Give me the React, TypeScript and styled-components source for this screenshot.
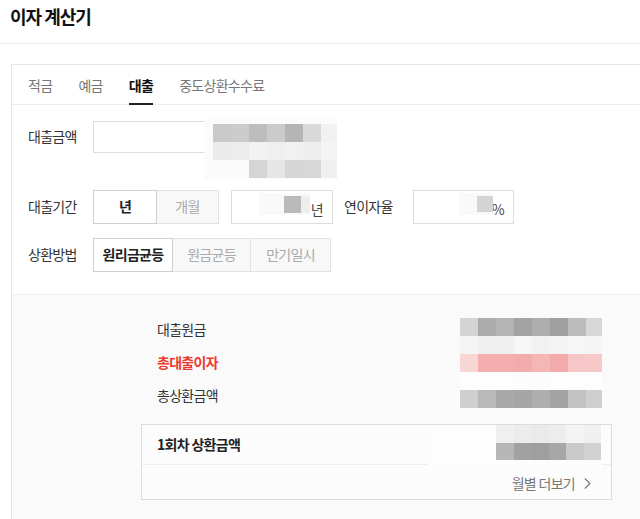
import styled, { createGlobalStyle } from "styled-components";
import { ChevronRight } from "lucide-react";

const GlobalStyle = createGlobalStyle`
  html, body {
    margin: 0;
    padding: 0;
    background: #fff;
    overflow: hidden;
  }
  body {
    font-family: "Noto Sans CJK KR", "Noto Sans", sans-serif;
    font-size: 14px;
    letter-spacing: -0.7px;
    color: #333;
  }
  * { box-sizing: border-box; }
`;

const TABS = ["적금", "예금", "대출", "중도상환수수료"];
const METHODS = ["원리금균등", "원금균등", "만기일시"];

// blurred (redacted) values, one colour per cell
const AMOUNT_CELLS = [
  ["#c9c9c9", "#cccccc", "#bdbdbd", "#cbcbcb", "#b5b5b5", "#d9d9d9", "#f1f1f1"],
  ["#ebebeb", "#ececec", "#f2f2f2", "#efefef", "#f1f1f1", "#eeeeee", "#f4f4f4"],
  ["transparent", "transparent", "#d5d5d5", "#e6e6e6", "#d6d6d6", "#d7d7d7", "#f0f0f0"],
];
const RESULT_CELLS = [
  ["#d4d4d4", "#ababab", "#b4b4b4", "#a3a3a3", "#adadad", "#9f9f9f", "#bcbcbc", "#d8d8d8"],
  ["#f5f5f5", "#f0f0f0", "#efefef", "#f6f6f6", "#f1f1f1", "#f3f3f3", "#f6f6f6", "#f5f5f5"],
  ["#f9d6d6", "#f4aeae", "#f4aeae", "#f3acac", "#f5b6b6", "#f3aaaa", "#f7c6c6", "#f7c8c8"],
  ["#fdfdfd", "#fdfdfd", "#fdfdfd", "#fcfcfc", "#fcfcfc", "#fdfdfd", "#fdfdfd", "#fdfdfd"],
  ["#cfcfcf", "#b9b9b9", "#a9a9a9", "#a5a5a5", "#aeaeae", "#a3a3a3", "#c2c2c2", "#cfcfcf"],
];
const FIRST_CELLS = [
  ["#efefef", "#ececec", "#eaeaea", "#ededed", "#f4f4f4", "#f0f0f0"],
  ["#b7b7b7", "#a2a2a2", "#9f9f9f", "#a7a7a7", "#c9c9c9", "#d2d2d2"],
];

function Mosaic({
  cells,
  size,
  x,
  y,
  w,
  h,
  padX,
  padY,
  bg,
}: {
  cells: string[][];
  size: number;
  x: number;
  y: number;
  w: number;
  h: number;
  padX: number;
  padY: number;
  bg: string;
}) {
  return (
    <MosaicBox $x={x} $y={y} $w={w} $h={h} $padX={padX} $padY={padY} $bg={bg}>
      <MosaicGrid $cols={cells[0].length} $size={size}>
        {cells.flat().map((c, idx) => (
          <Cell key={idx} $color={c} />
        ))}
      </MosaicGrid>
    </MosaicBox>
  );
}

function App() {
  return (
    <Page>
      <GlobalStyle />
      <Header>
        <Title>이자 계산기</Title>
      </Header>
      <Body>
        <Card>
          <TabBar>
            {TABS.map((t) => (
              <Tab key={t} $active={t === "대출"}>
                {t}
              </Tab>
            ))}
          </TabBar>
          <Form>
            <AmountRow>
              <Label>대출금액</Label>
              <Field $width={237}>
                <Mosaic
                  cells={AMOUNT_CELLS}
                  size={18}
                  x={110}
                  y={-3}
                  w={133}
                  h={60}
                  padX={9}
                  padY={5}
                  bg="#fbfbfb"
                />
              </Field>
            </AmountRow>
            <Row>
              <Label>대출기간</Label>
              <Segment>
                <SegButton $active $width={64}>
                  년
                </SegButton>
                <SegButton $width={62}>개월</SegButton>
              </Segment>
              <Field $width={102} $gap={12}>
                <Mosaic
                  cells={[["#bababa", "#eeeeee"]]}
                  size={17}
                  x={27}
                  y={2}
                  w={51}
                  h={22}
                  padX={25}
                  padY={3}
                  bg="#f9f9f9"
                />
                <Suffix>년</Suffix>
              </Field>
              <Label $gap={11} $width={69}>
                연이자율
              </Label>
              <Field $width={101}>
                <Mosaic
                  cells={[["#d4d4d4"]]}
                  size={16}
                  x={45}
                  y={2}
                  w={34}
                  h={22}
                  padX={18}
                  padY={3}
                  bg="#f9f9f9"
                />
                <Suffix>%</Suffix>
              </Field>
            </Row>
            <Row>
              <Label>상환방법</Label>
              <Segment>
                {METHODS.map((m, idx) => (
                  <SegButton key={m} $active={idx === 0} $width={idx === 1 ? 78 : 80}>
                    {m}
                  </SegButton>
                ))}
              </Segment>
            </Row>
          </Form>
          <ResultSection>
            <ResultList>
              <ResultRow>대출원금</ResultRow>
              <ResultRow $accent>총대출이자</ResultRow>
              <ResultRow>총상환금액</ResultRow>
              <Mosaic
                cells={RESULT_CELLS}
                size={18}
                x={319}
                y={6}
                w={142}
                h={90}
                padX={0}
                padY={0}
                bg="#fdfdfd"
              />
            </ResultList>
            <FirstBox>
              <FirstHead>1회차 상환금액</FirstHead>
              <FirstFoot>
                월별 더보기
                <ChevronRight size={19} strokeWidth={1.4} />
              </FirstFoot>
              <Mosaic
                cells={FIRST_CELLS}
                size={17.5}
                x={286}
                y={0}
                w={174}
                h={45}
                padX={68}
                padY={0}
                bg="#fdfdfd"
              />
            </FirstBox>
          </ResultSection>
        </Card>
      </Body>
    </Page>
  );
}
export default App;

const Page = styled.div`
  width: 640px;
  height: 519px;
  overflow: hidden;
  background: #fff;
`;

const Header = styled.div`
  height: 44px;
  padding: 4px 10px 0;
  border-bottom: 1px solid #eeeeee;
`;

const Title = styled.h1`
  margin: 0;
  font-size: 18px;
  line-height: 24px;
  letter-spacing: -1px;
  font-weight: 700;
  color: #111;
`;

const Body = styled.div`
  padding: 20px 0 0 11px;
`;

const Card = styled.div`
  width: 740px;
  border-top: 1px solid #e6e6e6;
  border-left: 1px solid #e6e6e6;
`;

const TabBar = styled.div`
  display: flex;
  gap: 26px;
  padding: 0 16px;
  height: 40px;
  border-bottom: 1px solid #eeeeee;
`;

const Tab = styled.div<{ $active?: boolean }>`
  height: 40px;
  display: flex;
  align-items: center;
  padding-top: 1px;
  font-weight: ${(p) => (p.$active ? 700 : 400)};
  color: ${(p) => (p.$active ? "#111" : "#777")};
  border-bottom: 2px solid ${(p) => (p.$active ? "#222" : "transparent")};
`;

const Form = styled.div`
  display: flex;
  flex-direction: column;
  gap: 14px;
  padding: 16px 16px 22px;
`;

const Row = styled.div`
  display: flex;
  align-items: center;
  height: 34px;
`;

const AmountRow = styled(Row)`
  height: 32px;
  margin-bottom: 23px;
`;

const Label = styled.div<{ $gap?: number; $width?: number }>`
  width: ${(p) => p.$width ?? 65}px;
  margin-left: ${(p) => p.$gap ?? 0}px;
  color: #333;
  padding-bottom: 2px;
`;

const Field = styled.div<{ $width: number; $gap?: number }>`
  position: relative;
  width: ${(p) => p.$width}px;
  height: 100%;
  margin-left: ${(p) => p.$gap ?? 0}px;
  border: 1px solid #dddddd;
  background: #fff;
  display: flex;
  align-items: center;
  justify-content: flex-end;
  padding-right: 9px;
`;

const Suffix = styled.span`
  color: #444;
  padding-top: 3px;
`;

const Segment = styled.div`
  display: flex;
  height: 100%;
`;

const SegButton = styled.div<{ $active?: boolean; $width: number }>`
  width: ${(p) => p.$width}px;
  height: 100%;
  display: flex;
  align-items: center;
  justify-content: center;
  padding-bottom: 2px;
  font-weight: ${(p) => (p.$active ? 700 : 400)};
  color: ${(p) => (p.$active ? "#222" : "#aaa")};
  background: ${(p) => (p.$active ? "#fff" : "#f8f8f8")};
  border: 1px solid ${(p) => (p.$active ? "#cfcfcf" : "#e2e2e2")};
  & + & {
    border-left: none;
  }
`;

const ResultSection = styled.div`
  border-top: 1px solid #eeeeee;
  background: #fafafa;
  padding: 17px 0 40px 129px;
`;

const ResultList = styled.div`
  position: relative;
  width: 470px;
  padding: 0 16px;
`;

const ResultRow = styled.div<{ $accent?: boolean }>`
  height: 33px;
  display: flex;
  align-items: center;
  font-weight: ${(p) => (p.$accent ? 700 : 400)};
  color: ${(p) => (p.$accent ? "#ec3b30" : "#333")};
`;

const FirstBox = styled.div`
  position: relative;
  margin-top: 13px;
  width: 471px;
  border: 1px solid #dcdcdc;
  background: #fcfcfc;
`;

const FirstHead = styled.div`
  height: 40px;
  display: flex;
  align-items: center;
  padding: 0 15px 2px;
  font-weight: 700;
  color: #222;
  border-bottom: 1px solid #eeeeee;
`;

const FirstFoot = styled.div`
  height: 34px;
  display: flex;
  align-items: center;
  justify-content: flex-end;
  gap: 3px;
  padding: 2px 14px 0;
  color: #777;
  svg {
    color: #777;
  }
`;

const MosaicBox = styled.div<{
  $x: number;
  $y: number;
  $w: number;
  $h: number;
  $padX: number;
  $padY: number;
  $bg: string;
}>`
  position: absolute;
  left: ${(p) => p.$x}px;
  top: ${(p) => p.$y}px;
  width: ${(p) => p.$w}px;
  height: ${(p) => p.$h}px;
  padding: ${(p) => p.$padY}px 0 0 ${(p) => p.$padX}px;
  background: ${(p) => p.$bg};
  overflow: hidden;
`;

const MosaicGrid = styled.div<{ $cols: number; $size: number }>`
  display: grid;
  grid-template-columns: repeat(${(p) => p.$cols}, ${(p) => p.$size}px);
  grid-auto-rows: ${(p) => p.$size}px;
`;

const Cell = styled.div<{ $color: string }>`
  background: ${(p) => p.$color};
`;
